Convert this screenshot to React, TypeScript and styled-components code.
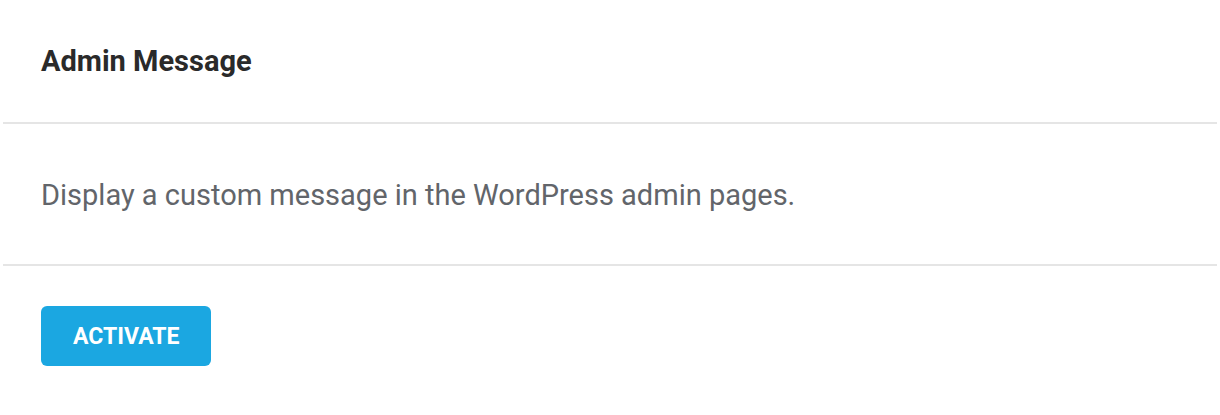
import * as React from 'react'
import styled, {createGlobalStyle} from 'styled-components'

// Page reset
const GlobalStyle = createGlobalStyle`
  html, body {
    margin: 0;
    padding: 0;
    background: #ffffff;
    font-family: Roboto, "Liberation Sans", Arial, sans-serif;
  }
`

// Card wrapper
const Card = styled.div`
  margin: 0 3px;
  background: #ffffff;
  display: flex;
  flex-direction: column;
`

// Card section, with a divider below unless it is the last one
const Section = styled.div<{$divider?: boolean}>`
  padding: ${({$divider}) => ($divider ? '44px 38px' : '40px 38px 49px')};
  border-bottom: ${({$divider}) => ($divider ? '2px solid #e5e5e5' : 'none')};
`

const Body = styled(Section)`
  padding-top: 54px;
  padding-bottom: 52px;
`

const Title = styled.h2`
  margin: 0;
  font-size: 29px;
  line-height: 34px;
  font-weight: 700;
  color: #2a2a2a;
`

const Description = styled.p`
  margin: 0;
  font-size: 29px;
  line-height: 34px;
  font-weight: 400;
  color: #62656a;
`

/** Primary action button */
export const Button = styled.button`
  display: inline-flex;
  align-items: center;
  justify-content: center;
  height: 60px;
  padding: 0 32px;
  border: none;
  border-radius: 6px;
  background: #1ba7e1;
  color: #ffffff;
  font-family: Roboto, "Liberation Sans", Arial, sans-serif;
  font-size: 23px;
  font-weight: 700;
  text-transform: uppercase;
  cursor: pointer;
  outline: none;
`

export default function App() {
  return (
    <>
      <GlobalStyle />
      <Card>
        <Section $divider>
          <Title>Admin Message</Title>
        </Section>
        <Body $divider>
          <Description>
            Display a custom message in the WordPress admin pages.
          </Description>
        </Body>
        <Section>
          <Button>Activate</Button>
        </Section>
      </Card>
    </>
  )
}
